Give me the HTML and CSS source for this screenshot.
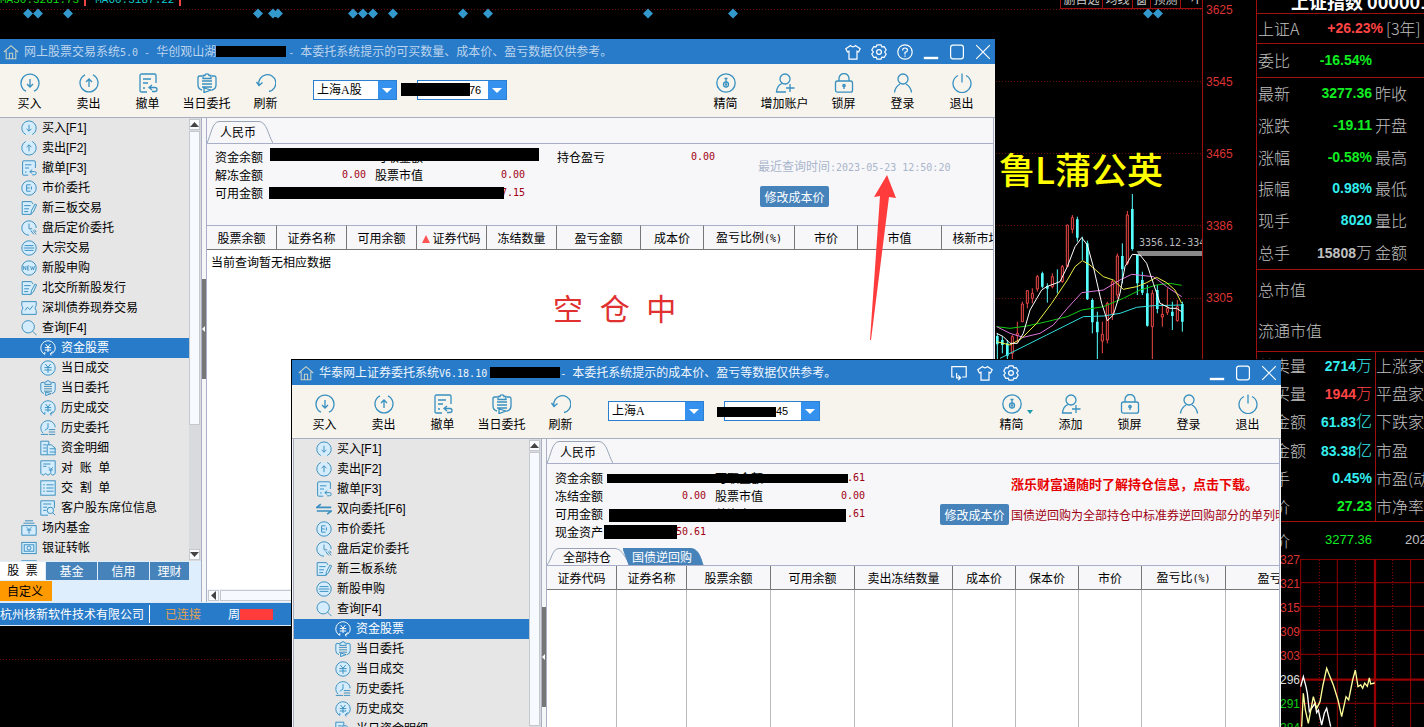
FILE: index.html
```html
<!DOCTYPE html>
<html lang="zh-CN">
<head>
<meta charset="utf-8">
<title>网上股票交易系统</title>
<link rel="stylesheet" href="styles.css">
</head>
<body>
<svg class="sprite" aria-hidden="true">
  <symbol id="home" viewBox="0 0 20 20"><path d="M1 10L10 2l9 8M4 8.500v10h12v-10M8 18.500v-7h4v7"/></symbol>
  <symbol id="buy" viewBox="0 0 20 20"><path d="M6 18.200A9 9 0 1 1 14 18.200M10 6v8M7 11l3 3 3-3"/></symbol>
  <symbol id="sell" viewBox="0 0 20 20"><path d="M6 1.800A9 9 0 1 0 14 1.800M10 14V6M7 9l3-3 3 3"/></symbol>
  <symbol id="cancel" viewBox="0 0 20 20"><path d="M9 19H3.500Q2 19 2 17.500V2.500Q2 1 3.500 1h13Q18 1 18 2.500V10M5 6h8M5 10h5M5 15h2M14 12l-3 2.500 3 2.500M11 14.500h6q2 0 2 2t-2 2h-3"/></symbol>
  <symbol id="clip" viewBox="0 0 20 20"><path d="M5 3H2.500Q1 3 1 5v7q0 4 4 5M15 3h2.500Q19 3 19 5v7q0 4-4 5M6 2.500h2Q8 .8 10 .8t2 1.700h2v3H6zM5 8h10M5 11h10M5 14h10M7 15v4.500l7-2.500z"/></symbol>
  <symbol id="refresh" viewBox="0 0 20 20"><path d="M3 12A8.500 8.500 0 1 1 13 18.500M.5 9L3 12.500 6.500 9.500"/></symbol>
  <symbol id="simple" viewBox="0 0 20 20"><circle cx="10" cy="10" r="9.200"/><path d="M8.500 5.500h3M10 5.500v3.500"/><circle cx="10" cy="11.500" r="2.500"/><circle cx="10" cy="11.500" r=".6"/></symbol>
  <symbol id="useradd" viewBox="0 0 20 20"><circle cx="10" cy="6" r="5"/><path d="M7 10.500Q2 12.500 1.500 19H11M15 11v8M11 15h8.500"/></symbol>
  <symbol id="lock" viewBox="0 0 20 20"><rect x="1.500" y="8" width="17" height="11.200" rx="2"/><path d="M5 8V5.500a5 5 0 0 1 10 0V8M10 12v4"/><circle cx="10" cy="12.500" r="1.200"/></symbol>
  <symbol id="user" viewBox="0 0 20 20"><circle cx="10" cy="6" r="5"/><path d="M1.500 19.500Q2 14 7 11M18.500 19.500Q18 14 13 11"/></symbol>
  <symbol id="power" viewBox="0 0 20 20"><path d="M6 2.500A9 9 0 1 0 14 2.500M10 .5v9"/></symbol>
  <symbol id="shirt" viewBox="0 0 20 20"><path d="M7 2Q10 5 13 2l6 4-2 4-2-1v10H5V9l-2 1-2-4z"/></symbol>
  <symbol id="gear" viewBox="0 0 20 20"><path d="M7.500 1h5l1 2.500 3-.3 2.500 4.300L17 10l2 2.500-2.500 4.300-3-.3-1 2.500h-5l-1-2.500-3 .3L1 12.500 3 10 1 7.500l2.500-4.300 3 .3z"/><circle cx="10" cy="10" r="3"/></symbol>
  <symbol id="help" viewBox="0 0 20 20"><circle cx="10" cy="10" r="9"/><path d="M7 8q0-3 3-3t3 2.700Q13 9.500 10 10.500V13M10 14.500v1.500"/></symbol>
  <symbol id="min" viewBox="0 0 20 20"><path stroke-width="3" d="M1 17.500h18"/></symbol>
  <symbol id="max" viewBox="0 0 20 20"><rect x="2" y="1.500" width="16" height="17" rx="3"/></symbol>
  <symbol id="close" viewBox="0 0 20 20"><path d="M1.500 1.500l17 17M18.500 1.500l-17 17"/></symbol>
  <symbol id="dock" viewBox="0 0 20 20"><path d="M4 15H1V2h18v13h-5M7 10v6h4M9 13l3 3-3 3"/></symbol>
  <symbol id="price" viewBox="0 0 20 20"><circle cx="10" cy="10" r="9"/><path d="M12 6H7v8h5M7 10h4M13 8v4"/></symbol>
  <symbol id="note" viewBox="0 0 20 20"><path d="M13 18H1.500V2H13l2 3M4 7h8M4 11h6M4 14.500h5M17.500 5l2 1-4 9-3 2.500.5-4z"/></symbol>
  <symbol id="clock" viewBox="0 0 20 20"><path d="M10 19A9 9 0 1 1 19 10M10 4.500V11h4M12 13l4 5M15 13l4 5M17 12l2 3"/></symbol>
  <symbol id="bulk" viewBox="0 0 20 20"><circle cx="10" cy="10" r="9"/><path d="M4.500 7h11M3.500 10h13M4.500 13h11"/></symbol>
  <symbol id="new" viewBox="0 0 20 20"><circle cx="10" cy="10" r="9"/><path fill="none" stroke-width="1" d="M3 12.500v-5l3 5v-5M10.500 7.500H8v5h2.500M8 10h2M12 7.500l1.200 5 1.300-4 1.200 4 1.300-5"/></symbol>
  <symbol id="bond" viewBox="0 0 20 20"><path d="M1 2h18v5q-3 3 0 6v5H1v-5q3-3 0-6z"/><path fill="none" d="M5 13l3-4 3 3 4-5"/></symbol>
  <symbol id="search" viewBox="0 0 20 20"><circle cx="9" cy="8.500" r="7.700"/><path d="M14.500 14l5 5"/></symbol>
  <symbol id="yen" viewBox="0 0 20 20"><circle cx="10" cy="10" r="9"/><path fill="none" d="M6.500 5L10 9l3.500-4M5.500 9.500h9M5.500 12.500h9M10 9v7"/></symbol>
  <symbol id="yenback" viewBox="0 0 20 20"><path d="M6 18A9 9 0 1 1 19 10Q19 16 13 17"/><path fill="none" d="M14 19.500L13 17l3-2.500M7 5l3 4 3-4M6 9.500h8M6 12.500h8M10 9v6M6 18v-3"/></symbol>
  <symbol id="hist" viewBox="0 0 20 20"><path d="M4 16.500A9 9 0 1 1 19 9"/><path fill="none" d="M1 18h9M10 4v6l-4 3M11 12h8M11 15h8M11 18h8"/></symbol>
  <symbol id="detail" viewBox="0 0 20 20"><path d="M9 18.500H1V1.500h10V6M4 6h4M4 10h4M4 14h4M9 18.500V6h5l5 4v8.500zM12 11h7M12 15h7"/></symbol>
  <symbol id="bill" viewBox="0 0 20 20"><path d="M1 17V1h18v16M1 17l3 2 3-2 3 2 3-2 3 2 3-2"/><path fill="none" d="M4 5h9M4 8h4M11 9l2.500 3L16 9M11 12.500h5M13.500 12v4"/></symbol>
  <symbol id="list" viewBox="0 0 20 20"><rect x="1" y="1" width="18" height="18"/><path d="M4 6h2M8 6h9M4 10h2M8 10h9M4 14h2M8 14h9"/></symbol>
  <symbol id="seat" viewBox="0 0 20 20"><path d="M10 19H1V1h17v9M4 5h10M4 9h5M4 13h4"/><circle cx="13" cy="13" r="4"/><path d="M16 16l3 3"/></symbol>
  <symbol id="fund" viewBox="0 0 20 20"><path d="M5 1h10M3 4h14M1 7h18v12H1z"/><path fill="none" d="M7 9l3 3 3-3M7 12.500h6M10 12v5"/></symbol>
  <symbol id="bank" viewBox="0 0 20 20"><rect x="1" y="3" width="18" height="14"/><rect x="4" y="6" width="12" height="8"/><circle cx="10" cy="10" r="2.500"/></symbol>
  <symbol id="swap" viewBox="0 0 20 20"><path fill="none" stroke-width="2" d="M19 8H1l5-4M1 12.500h18l-5 4"/></symbol>
</svg>

<div class="desktop">
  <main class="chart">
    <div class="plot">
      <svg class="grid" aria-hidden="true">
        <g class="dots">
          <line x1="0" x2="100%" y1="9.500" y2="9.500"/><line x1="0" x2="100%" y1="81.500" y2="81.500"/><line x1="0" x2="100%" y1="153.500" y2="153.500"/><line x1="0" x2="100%" y1="225.500" y2="225.500"/><line x1="0" x2="100%" y1="298.500" y2="298.500"/><line x1="0" x2="100%" y1="659.500" y2="659.500"/>
        </g>
        <path class="gems" d="M23 13.500l5-5 5 5-5 5zm10 0l5-5 5 5-5 5zm30 0l5-5 5 5-5 5zm190 0l5-5 5 5-5 5zm15 0l5-5 5 5-5 5zm5 0l5-5 5 5-5 5zm75 0l5-5 5 5-5 5zm10 0l5-5 5 5-5 5zm10 0l5-5 5 5-5 5zm20 0l5-5 5 5-5 5zm70 0l5-5 5 5-5 5zm25 0l5-5 5 5-5 5zm160 0l5-5 5 5-5 5zm85 0l5-5 5 5-5 5zm415 0l5-5 5 5-5 5zm10 0l5-5 5 5-5 5z"/>
      </svg>
      <div class="plot-top">
        <p class="averages"><span class="ma30">MA30:3281.73</span><i></i><span class="ma60">MA60:3187.22</span><i></i></p>
        <nav class="chart-tabs"><button>删自选</button><button>均线</button><button>窗</button><button>预测</button><button>→I</button></nav>
      </div>
      <svg class="candles" viewBox="0 0 672 1080" aria-hidden="true">
        <g fill="none" stroke="#f04848" stroke-width="3">
          <path d="M97 1005v75M112 965v65M127 905v10M142 870v55M157 865v45M172 825v50M217 820v45M247 795v53M277 645v55M367 965v95M382 905v125M397 840v120M412 760v135M442 633v162M517 870v207M547 910v70M562 865v80M592 900v65"/>
          <path fill="#000" d="M94 1010h6v50h-6zM109 1000h6v6h-6zM124 912h6v53h-6zM139 872h6v38h-6zM154 880h6v15h-6zM169 830h6v37h-6zM214 830h6v30h-6zM244 800h6v45h-6zM259 675h6v125h-6zM274 653h6v35h-6zM364 1003h6v20h-6zM379 910h6v110h-6zM394 845h6v95h-6zM409 768h6v117h-6zM439 645h6v145h-6zM514 880h6v100h-6zM544 943h6v8h-6zM559 925h6v12h-6zM589 920h6v42h-6z"/>
        </g>
        <g fill="none" stroke="#5ff" >
          <path stroke-width="3" d="M52 1000v77M67 1010v50M82 1020v60M187 815v50M202 850v58M232 808v72M292 650v75M307 710v70M322 722v178M337 895v105M352 935v142M427 730v120M457 582v170M472 765v120M487 815v70M502 855v125M532 855v85M577 905v85M607 905v90"/>
          <path stroke-width="8" d="M52 1008v25M67 1020v15M82 1030v37M187 820v40M202 858v8M292 658v55M322 730v168M337 900v67M352 965v32M427 768v40M457 627v120M472 765v85M487 840v38M502 880v97M532 870v57M577 935v13M607 912v53"/>
        </g>
        <path fill="#888" stroke="none" d="M470 753h202v15H478z"/>
        <g fill="none" stroke-width="3">
          <path stroke="#3dd" d="M60 1075L120 1045 200 1005 310 950 370 948 420 940 470 922 520 917 605 915"/>
          <path stroke="#1c1" d="M50 980L90 985 140 978 200 965 262 950 305 930 370 920 430 895 480 870 530 855 570 850 605 856"/>
          <path stroke="#d7d" d="M50 980L90 1000 130 1012 180 1000 220 975 262 925 305 878 370 870 420 840 455 823 520 830 560 860 605 890"/>
          <path stroke="#ee4" d="M50 1025L90 1035 125 1015 170 970 215 910 262 840 285 800 307 782 330 795 370 830 400 840 430 868 470 860 500 848 530 832 560 848 585 870 605 910"/>
          <path stroke="#fff" d="M50 1000L70 1010 90 1030 112 1030 130 1000 150 930 185 870 200 860 240 845 262 800 285 740 305 713 322 735 340 800 365 910 382 962 400 945 420 880 435 800 457 763 480 765 500 790 520 850 540 910 570 925 590 925 605 935"/>
        </g>
      </svg>
      <p class="range">3356.12-3343.50</p>
      <p class="signature">鲁L蒲公英</p>
    </div>
    <div class="axis"><span>3625</span><span>3545</span><span>3465</span><span>3386</span><span>3305</span></div>
  </main>

  <aside class="quote">
    <h1>上证指数 000001</h1>
    <section><div class="row r30"><div class="pair wide"><span>上证A</span><b class="up">+26.23%</b></div><span>[3年]</span></div></section>
    <section><div class="row r34"><div class="pair"><span>委比</span><b class="down">-16.54%</b></div></div></section>
    <section class="latest">
      <div class="row"><div class="pair"><span>最新</span><b class="down">3277.36</b></div><span>昨收</span></div>
      <div class="row"><div class="pair"><span>涨跌</span><b class="down">-19.11</b></div><span>开盘</span></div>
      <div class="row"><div class="pair"><span>涨幅</span><b class="down">-0.58%</b></div><span>最高</span></div>
      <div class="row"><div class="pair"><span>振幅</span><b class="flat">0.98%</b></div><span>最低</span></div>
      <div class="row"><div class="pair"><span>现手</span><b class="flat">8020</b></div><span>量比</span></div>
      <div class="row"><div class="pair"><span>总手</span><span><b>15808</b>万</span></div><span>金额</span></div>
    </section>
    <section class="caps"><div class="row">总市值</div><div class="row">流通市值</div></section>
    <section class="volumes">
      <div class="row"><div class="pair"><span>总卖量</span><span class="flat"><b>2714</b>万</span></div><span>上涨家</span></div>
      <div class="row"><div class="pair"><span>总买量</span><span class="up"><b>1944</b>万</span></div><span>平盘家</span></div>
      <div class="row"><div class="pair"><span>卖金额</span><span class="flat"><b>61.83</b>亿</span></div><span>下跌家</span></div>
      <div class="row"><div class="pair"><span>买金额</span><span class="flat"><b>83.38</b>亿</span></div><span>市盈</span></div>
      <div class="row"><div class="pair"><span>换手</span><b class="flat">0.45%</b></div><span>市盈(动</span></div>
      <div class="row"><div class="pair"><span>均价</span><b class="down">27.23</b></div><span>市净率</span></div>
    </section>
    <section><div class="row r38"><div class="pair"><span>现价</span><span class="plain down">3277.36</span></div><span class="plain date">2023</span></div></section>
    <div class="intraday">
      <div class="levels"><span>3327</span><span>3321</span><span>3315</span><span>3309</span><span>3303</span><span class="mid">3296</span><span class="low">3291</span><span class="low">3284</span></div>
      <svg viewBox="720 657 372 504" aria-hidden="true">
        <g fill="none" stroke="#900" stroke-width="3"><path d="M722 657v504M832 657v504M1052 657v504M720 658h372M720 728h372M720 799h372M720 871h372M720 943h372M720 1090h372"/><path stroke-width="7" d="M945 657v504M720 1019h372"/><path stroke-dasharray="3 6" d="M778 660v501M886 660v501M998 660v501"/>
        <path stroke="#fff" stroke-width="4" d="M722 1040l8-30 8 30 4 20 6 55 17-25 5 28 5-8 10 45 8-35 7-15 12 55"/><path stroke="#ff9" stroke-width="4" d="M725 1160l5-100 6 50 9 40 15-80 10 35 10-20 9-50 11-50 10 25 10 25 14 45 11 50 13-60 8 10 12-60 8-30 8 50 8-5 6 10 6-16 8 10 6-25 4 18 12-3"/></g>
      </svg>
    </div>
  </aside>

  <section class="window first">
    <header class="title"><svg class="home"><use href="#home"/></svg><h2>网上股票交易系统<span class="num">5.0 - </span>华创观山湖</h2><i class="mask"></i><h2><span class="num">- </span>本委托系统提示的可买数量、成本价、盈亏数据仅供参考。</h2>
      <div class="controls"><button aria-label="皮肤"><svg><use href="#shirt"/></svg></button><button aria-label="设置"><svg><use href="#gear"/></svg></button><button aria-label="帮助"><svg><use href="#help"/></svg></button><button aria-label="最小化"><svg><use href="#min"/></svg></button><button aria-label="最大化"><svg><use href="#max"/></svg></button><button aria-label="关闭"><svg><use href="#close"/></svg></button></div>
    </header>
    <div class="toolbar">
      <button><svg><use href="#buy"/></svg>买入</button><button><svg><use href="#sell"/></svg>卖出</button><button><svg><use href="#cancel"/></svg>撤单</button><button><svg><use href="#clip"/></svg>当日委托</button><button><svg><use href="#refresh"/></svg>刷新</button>
      <div class="combos"><span class="combo market"><select aria-label="市场"><option>上海A股</option></select></span><span class="combo account"><select aria-label="账户"><option>76</option></select><i class="mask"></i></span></div>
      <button><svg><use href="#simple"/></svg>精简</button><button><svg><use href="#useradd"/></svg>增加账户</button><button><svg><use href="#lock"/></svg>锁屏</button><button><svg><use href="#user"/></svg>登录</button><button><svg><use href="#power"/></svg>退出</button>
    </div>
    <div class="body">
      <div class="side">
        <div class="treebox">
          <ul class="tree">
            <li><button><svg><use href="#buy"/></svg>买入[F1]</button></li><li><button><svg><use href="#sell"/></svg>卖出[F2]</button></li><li><button><svg><use href="#cancel"/></svg>撤单[F3]</button></li><li><button><svg><use href="#price"/></svg>市价委托</button></li><li><button><svg><use href="#note"/></svg>新三板交易</button></li><li><button><svg><use href="#clock"/></svg>盘后定价委托</button></li><li><button><svg><use href="#bulk"/></svg>大宗交易</button></li><li><button><svg><use href="#new"/></svg>新股申购</button></li><li><button><svg><use href="#note"/></svg>北交所新股发行</button></li><li><button><svg><use href="#bond"/></svg>深圳债券现券交易</button></li>
            <li><button><svg><use href="#search"/></svg>查询[F4]</button>
              <ul><li><button class="on"><svg><use href="#yenback"/></svg>资金股票</button></li><li><button><svg><use href="#yen"/></svg>当日成交</button></li><li><button><svg><use href="#clip"/></svg>当日委托</button></li><li><button><svg><use href="#yenback"/></svg>历史成交</button></li><li><button><svg><use href="#hist"/></svg>历史委托</button></li><li><button><svg><use href="#detail"/></svg>资金明细</button></li><li><button><svg><use href="#bill"/></svg>对  账  单</button></li><li><button><svg><use href="#list"/></svg>交  割  单</button></li><li><button><svg><use href="#seat"/></svg>客户股东席位信息</button></li></ul></li>
            <li><button><svg><use href="#fund"/></svg>场内基金</button></li><li><button><svg><use href="#bank"/></svg>银证转帐</button></li><li><button aria-label="更多"><svg><use href="#list"/></svg></button></li>
          </ul>
          <div class="vbar"><i class="arrow upward"></i><i class="thumb"></i><i class="arrow downward"></i></div>
        </div>
        <div class="modes"><button class="on">股  票</button><button>基金</button><button>信用</button><button>理财</button></div>
        <div class="modes custom"><button>自定义</button></div>
      </div>
      <div class="splitter"><i></i></div>
      <div class="content">
        <div class="tabs"><button class="tab"><svg viewBox="0 0 66 22" preserveAspectRatio="none"><path d="M0 22C4 14 5 1 12 .5H52C60 1 61 14 66 22"/></svg>人民币</button></div>
        <div class="info">
          <dl>
            <div><dt>资金余额</dt><dd></dd></div><div><dt>可取金额</dt><dd></dd></div><div><dt>持仓盈亏</dt><dd>0.00</dd></div>
            <div><dt>解冻金额</dt><dd>0.00</dd></div><div><dt>股票市值</dt><dd>0.00</dd></div><div></div>
            <div><dt>可用金额</dt><dd></dd></div><div><dt></dt><dd>7.15</dd></div><div></div>
          </dl>
          <i class="mask m1"></i><i class="mask m2"></i>
          <div class="stamp"><p>最近查询时间<span class="num">:2023-05-23 12:50:20</span></p><button class="action">修改成本价</button></div>
        </div>
        <div class="data">
          <table><colgroup><col class="c70"><col class="c70"><col class="c70"><col class="c70"><col class="c70"><col class="c84"><col class="c63"><col class="c91"><col class="c63"><col class="c84"><col class="c70"></colgroup>
            <thead><tr><th>股票余额</th><th>证券名称</th><th>可用余额</th><th class="sorted">证券代码</th><th>冻结数量</th><th>盈亏金额</th><th>成本价</th><th>盈亏比例<span class="num">(%)</span></th><th>市价</th><th>市值</th><th>核新市场</th></tr></thead>
            <tbody><tr><td colspan="11">当前查询暂无相应数据</td></tr></tbody></table>
          <p class="empty">空  仓  中</p>
          <div class="hbar"><i class="arrow leftward"></i><i class="thumb"></i></div>
        </div>
      </div>
    </div>
    <footer class="status"><span>杭州核新软件技术有限公司</span><span class="link">已连接</span><span>周<i class="redact"></i></span></footer>
    <svg class="pointer" viewBox="869 174 28 168" aria-hidden="true"><path fill="#ff3b3b" d="M887 175l9 23-7-1-18 143h-1l10-144-6 1z"/></svg>
  </section>

  <section class="window second">
    <header class="title"><svg class="home"><use href="#home"/></svg><h2>华泰网上证券委托系统<span class="num">V6.18.10</span></h2><i class="mask"></i><h2><span class="num">- </span>本委托系统提示的成本价、盈亏等数据仅供参考。</h2>
      <div class="controls tools"><button aria-label="停靠"><svg><use href="#dock"/></svg></button><button aria-label="皮肤"><svg><use href="#shirt"/></svg></button><button aria-label="设置"><svg><use href="#gear"/></svg></button></div>
      <div class="controls"><button aria-label="最小化"><svg><use href="#min"/></svg></button><button aria-label="最大化"><svg><use href="#max"/></svg></button><button aria-label="关闭"><svg><use href="#close"/></svg></button></div>
    </header>
    <div class="toolbar">
      <button><svg><use href="#buy"/></svg>买入</button><button><svg><use href="#sell"/></svg>卖出</button><button><svg><use href="#cancel"/></svg>撤单</button><button><svg><use href="#clip"/></svg>当日委托</button><button><svg><use href="#refresh"/></svg>刷新</button>
      <div class="combos"><span class="combo market"><select aria-label="市场"><option>上海A</option></select></span><span class="combo account"><select aria-label="账户"><option>45</option></select><i class="mask"></i></span></div>
      <button class="more"><svg><use href="#simple"/></svg>精简</button><button><svg><use href="#useradd"/></svg>添加</button><button><svg><use href="#lock"/></svg>锁屏</button><button><svg><use href="#user"/></svg>登录</button><button><svg><use href="#power"/></svg>退出</button>
    </div>
    <div class="body">
      <div class="side">
        <div class="treebox">
          <ul class="tree">
            <li><button><svg><use href="#buy"/></svg>买入[F1]</button></li><li><button><svg><use href="#sell"/></svg>卖出[F2]</button></li><li><button><svg><use href="#cancel"/></svg>撤单[F3]</button></li><li><button><svg><use href="#swap"/></svg>双向委托[F6]</button></li><li><button><svg><use href="#price"/></svg>市价委托</button></li><li><button><svg><use href="#clock"/></svg>盘后定价委托</button></li><li><button><svg><use href="#note"/></svg>新三板系统</button></li><li><button><svg><use href="#bulk"/></svg>新股申购</button></li>
            <li><button><svg><use href="#search"/></svg>查询[F4]</button>
              <ul><li><button class="on"><svg><use href="#yenback"/></svg>资金股票</button></li><li><button><svg><use href="#clip"/></svg>当日委托</button></li><li><button><svg><use href="#yen"/></svg>当日成交</button></li><li><button><svg><use href="#hist"/></svg>历史委托</button></li><li><button><svg><use href="#yenback"/></svg>历史成交</button></li><li><button><svg><use href="#detail"/></svg>当日资金明细</button></li></ul></li>
          </ul>
          <div class="vbar"><i class="arrow upward"></i><i class="thumb"></i></div>
        </div>
      </div>
      <div class="splitter"><i></i></div>
      <div class="content">
        <div class="tabs"><button class="tab"><svg viewBox="0 0 66 22" preserveAspectRatio="none"><path d="M0 22C4 14 5 1 12 .5H52C60 1 61 14 66 22"/></svg>人民币</button></div>
        <div class="info">
          <dl>
            <div><dt>资金余额</dt><dd></dd></div><div><dt>可取金额</dt><dd>.61</dd></div>
            <div><dt>冻结金额</dt><dd>0.00</dd></div><div><dt>股票市值</dt><dd>0.00</dd></div>
            <div><dt>可用金额</dt><dd></dd></div><div><dt>总资产</dt><dd>.61</dd></div>
            <div><dt>现金资产</dt><dd>50.61</dd></div><div></div>
          </dl>
          <i class="mask m1"></i><i class="mask m2"></i><i class="mask m3"></i>
          <div class="promo"><a href="#download">涨乐财富通随时了解持仓信息，点击下载。</a><div><button class="action">修改成本价</button><span>国债逆回购为全部持仓中标准券逆回购部分的单列明</span></div></div>
        </div>
        <div class="tabs sub"><button class="tab"><svg viewBox="0 0 84 17" preserveAspectRatio="none"><path d="M0 17C5 11 5 1 12 .5H68C76 1 78 11 84 17"/></svg>全部持仓</button><button class="tab blue"><svg viewBox="0 0 84 17" preserveAspectRatio="none"><path d="M6 17L0 .5H68C76 1 78 11 80 17"/></svg>国债逆回购</button></div>
        <div class="data lined">
          <table><colgroup><col class="c70"><col class="c70"><col class="c84"><col class="c84"><col class="c98"><col class="c63"><col class="c63"><col class="c63"><col class="c84"><col class="c88"></colgroup>
            <thead><tr><th>证券代码</th><th>证券名称</th><th>股票余额</th><th>可用余额</th><th>卖出冻结数量</th><th>成本价</th><th>保本价</th><th>市价</th><th>盈亏比<span class="num">(%)</span></th><th>盈亏</th></tr></thead>
            <tbody><tr><td></td><td></td><td></td><td></td><td></td><td></td><td></td><td></td><td></td><td></td></tr></tbody></table>
        </div>
      </div>
    </div>
  </section>
</div>
</body>
</html>
```
FILE: styles.css
```css
* { box-sizing: border-box; }
body { margin: 0; background: #000; color: #000; font: 12px/18px "Noto Sans CJK SC", sans-serif; }
h1, h2, p, ul, dl, dd { margin: 0; padding: 0; }
ul { list-style: none; }
button, select { font: inherit; color: inherit; border: 0; margin: 0; padding: 0; background: none; white-space: pre; }
i { display: block; }
svg { display: block; flex: none; fill: none; stroke: currentColor; }
.sprite { position: absolute; width: 0; height: 0; }
.num { font: 10px/18px "DejaVu Sans Mono", monospace; white-space: pre; }
.mask { background: #000; }

.desktop { position: relative; height: 100vh; overflow: hidden; display: grid; grid-template-columns: 1fr 168px; }

/* market chart */
.chart { display: grid; grid-template-columns: 1fr 53px; min-width: 0; }
.plot { position: relative; overflow: hidden; border-right: 1px solid #a01010; }
.grid { position: absolute; width: 100%; height: 100%; stroke: none; }
.dots { stroke: #6a0d0d; stroke-dasharray: 1 2; }
.gems { fill: #39c; }
.plot-top { position: relative; display: flex; justify-content: space-between; height: 9px; align-items: flex-end; }
.averages { display: flex; align-items: center; font: 11px/16px "Liberation Mono", monospace; height: 14px; margin-bottom: 2px; }
.averages i { width: 2px; height: 12px; margin: 0 9px 0 5px; background: #e44; }
.ma30 { color: #1d1; }
.ma60 { color: #1cc; }
.chart-tabs { display: flex; color: #ccc; border-bottom: 1px solid #a01010; }
.chart-tabs button { border-left: 1px solid #a01010; padding: 0 3px 0 2px; line-height: 18px; }
.candles { position: absolute; top: 0; right: -2px; width: 224px; height: 360px; }
.range { position: absolute; top: 234px; right: 0; width: 63px; overflow: hidden; white-space: nowrap; color: #bbb; font: 10px/18px "DejaVu Sans Mono", monospace; }
.signature { position: absolute; top: 142px; right: 39px; color: #ff0; font-size: 36px; line-height: 52px; font-weight: 500; }
.axis { display: flex; flex-direction: column; gap: 56px; padding: 2px 0 0 3px; font: 12px/16px "Liberation Sans", sans-serif; color: #d33; }

/* quote panel */
.quote { overflow: hidden; border-left: 1px solid #a01010; color: #c0c0c0; font-size: 16px; font-weight: 300; display: flex; flex-direction: column; }
.quote h1 { height: 13px; padding: 0 0 2px 34px; display: flex; align-items: flex-end; color: #fff; font-size: 18px; line-height: 20px; white-space: nowrap; }
.quote section { flex: none; display: flex; flex-direction: column; border-top: 1px solid #a01010; }
.row { flex: 1; display: flex; align-items: center; gap: 3px; padding: 0 0 2px 1px; white-space: nowrap; line-height: 24px; }
.pair { flex: none; width: 114px; display: flex; justify-content: space-between; align-items: center; }
.pair.wide { width: 125px; }
.pair b { font: bold 14px/24px "Liberation Sans", sans-serif; }
.up { color: #f44; }
.down { color: #1e2; }
.flat { color: #3ee; }
.r30 { flex: none; height: 29px; }
.r34 { flex: none; height: 33px; }
.r38 { flex: none; height: 37px; }
.latest { height: 192px; }
.caps { height: 82px; }
.volumes { height: 170px; }
.volumes .row { padding-bottom: 0; }
.volumes .row > span { border-left: 1px solid #a01010; height: 100%; line-height: 26px; }
.volumes .pair { padding-bottom: 2px; }
.plain { font: 13px/24px "Liberation Sans", sans-serif; }
.date { padding-left: 30px; }
.intraday { flex: 1; display: flex; min-height: 0; }
.intraday svg { width: 124px; height: 168px; }
.levels { width: 43px; text-align: right; font: 12px/16px "Liberation Sans", sans-serif; color: #d33; display: flex; flex-direction: column; gap: 8px; margin-top: -7px; }
.levels .mid { color: #ddd; }
.levels .low { color: #1c1; }

/* windows */
.window { position: absolute; display: flex; flex-direction: column; background: #f7f7f9; }
.first { left: 0; right: 429px; top: 39px; bottom: 101px; }
.second { left: 291px; right: 143px; top: 359px; bottom: 0; border: solid #000; border-width: 1px 0 0 1px; }
.title { flex: none; height: 25px; display: flex; align-items: center; padding: 0 4px 0 3px; background: #287bc9; color: #bcd3ec; }
.second .title { padding-left: 6px; color: #f0f6fc; }
.title h2 { font-size: 12px; line-height: 18px; font-weight: 400; white-space: nowrap; }
.home { width: 16px; height: 16px; margin-right: 5px; color: #c9d2c4; stroke-width: 1.3; }
.title .mask { width: 70px; height: 11px; margin-right: 2px; }
.second .title .mask { margin: 0 0 0 3px; }
.controls { margin-left: auto; display: flex; gap: 10px; color: #fff; }
.tools { margin-right: 190px; }
.tools + .controls { margin-left: 0; }
.controls svg { width: 16px; height: 16px; stroke-width: 1.5; }

.toolbar { flex: none; display: flex; height: 53px; background: #f7f4ed; padding-right: 4px; }
.second .toolbar { padding-left: 3px; }
.toolbar button { position: relative; flex: none; width: 59px; display: flex; flex-direction: column; align-items: center; gap: 1px; padding-top: 9px; }
.toolbar svg { width: 20px; height: 20px; color: #3790c0; stroke-width: 1.3; }
.more::after { content: ""; position: absolute; right: 8px; top: 25px; border: 3px solid transparent; border-top: 4px solid #1b9aaa; }
.combos { flex: 1; display: flex; gap: 20px; padding: 16px 0 0 18px; }
.combo { position: relative; display: block; height: 20px; background: #fff; border: 1px solid #2a7fd0; }
.combo select { appearance: none; display: block; width: 100%; height: 18px; padding-left: 3px; line-height: 18px; color: #000; font-family: "Liberation Serif", "Noto Sans CJK SC", serif; }
.combo::after { content: ""; position: absolute; right: 0; top: 0; width: 18px; height: 18px; background: #fff; clip-path: polygon(4px 7px, 14px 7px, 9px 12px); }
.combo::before { content: ""; position: absolute; right: 0; top: 0; width: 18px; height: 18px; background: #3492ee; }
.market { width: 84px; }
.account { width: 90px; }
.account select { padding-left: 51px; font: 11px/18px "Liberation Sans", sans-serif; }
.account .mask { position: absolute; left: -17px; top: 2px; width: 69px; height: 13px; }
.second .combos { padding-left: 18px; }
.second .market, .second .account { width: 96px; }
.second .account .mask { left: -8px; top: 5px; width: 59px; height: 10px; }

.body { flex: 1; min-height: 0; display: flex; border-top: 1px solid #a9afc0; }
.second .body { padding-left: 1px; }
.side { flex: none; width: 202px; display: flex; flex-direction: column; background: #dfeefc; border-right: 1px solid #a9afc0; }
.second .side { width: 249px; border-left: 1px solid #a9afc0; }
.treebox { flex: 1; min-height: 0; display: flex; background: #e6e6e6; overflow: hidden; }
.tree { flex: 1; height: 0; }
.tree button { width: 100%; height: 20px; display: flex; align-items: center; gap: 5px; padding-left: 21px; font-family: "Liberation Sans", "Noto Sans CJK SC", sans-serif; }
.tree ul button { padding-left: 40px; }
.second .tree button { padding-left: 22px; }
.second .tree ul button { padding-left: 41px; }
.tree svg { width: 16px; height: 16px; color: #3a8fc0; stroke-width: 1.2; fill: #d4ecfb; }
.tree .on { background: #287bc9; color: #fff; }
.tree .on svg { color: #fff; fill: none; }
.vbar { flex: none; width: 12px; padding: 1px 0; display: flex; flex-direction: column; background: #d9dadd; }
.arrow { flex: none; position: relative; width: 11px; height: 11px; background: #fafcff; border: 1px solid #c4c8cf; }
.arrow::after { content: ""; position: absolute; left: 0; top: 2px; width: 9px; height: 5px; background: #444; clip-path: polygon(50% 0, 100% 100%, 0 100%); }
.downward::after { clip-path: polygon(0 0, 100% 0, 50% 100%); }
.leftward::after { left: 2px; top: 0; width: 5px; height: 9px; clip-path: polygon(0 50%, 100% 0, 100% 100%); }
.vbar .thumb { flex: 1; margin: 1px 1px 0 0; background: #f6fafe; border: 1px solid #c4c8cf; }
.first .vbar .thumb { margin-bottom: 124px; }
.modes { flex: none; display: flex; gap: 1px; height: 18px; margin-top: 1px; padding-right: 12px; }
.modes button { flex: 1; background: #4683bb; color: #fff; }
.modes button:last-child { flex: 0 0 39px; }
.modes button.on { flex: 0 0 45px; background: #fff; color: #000; font-family: "Liberation Sans", "Noto Sans CJK SC", sans-serif; }
.modes.custom { height: 21px; padding-bottom: 1px; }
.modes.custom button { flex: 0 0 52px; background: #f90; color: #000; padding-right: 2px; }
.splitter { flex: none; width: 4px; background: #f4f6f8; display: flex; align-items: flex-start; }
.splitter i { width: 4px; height: 100px; margin-top: 161px; background: #777; display: flex; align-items: center; }
.second .splitter i { margin-top: 168px; }
.splitter i::after { content: ""; border: 3px solid transparent; border-left: 0; border-right-color: #fff; }

.content { flex: 1; min-width: 0; display: flex; flex-direction: column; border: solid #a9afc8; border-width: 0 1px; margin-right: 1px; overflow: hidden; }
.tabs { flex: none; display: flex; align-items: flex-end; height: 26px; border-bottom: 1px solid #a9afc8; }
.second .tabs { height: 25px; }
.tab { position: relative; z-index: 0; width: 66px; height: 22px; padding-right: 4px; }
.tab svg { position: absolute; inset: 0; width: 100%; height: 100%; z-index: -1; fill: #f7f7f9; stroke: #98a5b8; }
.second .sub { height: 17px; }
.sub .tab { width: 84px; height: 17px; line-height: 17px; }
.sub .blue { margin-left: -8px; color: #fff; padding-right: 6px; }
.sub .blue svg { fill: #4683bb; stroke: #4683bb; }
.info { flex: none; position: relative; display: flex; height: 81px; padding: 4px 0 0 8px; }
.info dl { flex: none; display: grid; grid-template-columns: 151px 150px 158px; grid-auto-rows: 18px; column-gap: 9px; }
.first .info dl > :nth-child(3n) { margin-left: 23px; margin-right: -23px; }
.info dl div { display: flex; justify-content: space-between; }
.info dd { color: #a00012; font: 10px/18px "DejaVu Sans Mono", monospace; }
.info .mask { position: absolute; }
.first .m1 { left: 63px; top: 4px; width: 269px; height: 13px; }
.first .m2 { left: 62px; top: 43px; width: 235px; height: 12px; }
.stamp { margin-left: 66px; padding-top: 9px; color: #a9b5cb; white-space: nowrap; }
.action { height: 21px; width: 69px; border-radius: 2px; background: #4683bb; color: #fff; }
.stamp .action { margin: 9px 0 0 2px; display: block; }
.second .info { height: 85px; padding-top: 5px; }
.second .info dl { grid-template-columns: 151px 150px; }
.second .m1 { left: 60px; top: 10px; width: 241px; height: 9px; }
.second .m2 { left: 62px; top: 45px; width: 237px; height: 13px; }
.second .m3 { left: 57px; top: 61px; width: 73px; height: 14px; }
.promo { margin-left: auto; width: 339px; flex: none; overflow: hidden; padding-top: 6px; white-space: nowrap; color: #a00012; }
.promo a { display: block; margin-left: 71px; color: #e80000; font-size: 13px; font-weight: 700; text-decoration: none; }
.promo div { display: flex; gap: 2px; align-items: center; margin-top: 11px; }
.promo .action { flex: none; }

.data { flex: 1; min-height: 0; position: relative; background: #fff; display: flex; flex-direction: column; }
.first .data { overflow: hidden; }
table { width: 805px; table-layout: fixed; border-collapse: separate; border-spacing: 0; }
.c63 { width: 63px; } .c70 { width: 70px; } .c84 { width: 84px; } .c88 { width: 88px; } .c91 { width: 91px; } .c98 { width: 98px; }
th { height: 25px; padding: 0; font-weight: 400; background: #f7f7f9; border: solid #777; border-width: 0 1px 1px 0; white-space: nowrap; }
.first th { border-top: 1px solid #a9afc8; }
td { padding: 2px 4px; line-height: 19px; }
.sorted::before { content: ""; display: inline-block; border: 4px solid transparent; border-top: 0; border-bottom: 8px solid #f55; margin-right: 2px; }
.lined table { width: 767px; height: 100%; }
.lined th { height: 24px; }
.lined td { border-right: 1px solid #bbb; }
.empty { padding: 15px 0 0 346px; color: #e03030; font: 30px/44px "Liberation Sans", "Noto Sans CJK SC", sans-serif; white-space: pre; }
.hbar { margin-top: auto; display: flex; gap: 1px; height: 13px; padding: 1px; background: #f0f3f8; }
.hbar .thumb { flex: 1; border: 1px solid #c4c8cf; background: #f6fafe; }

.status { flex: none; height: 24px; display: flex; align-items: center; background: #287bc9; color: #fff; border: solid #dceaf8; border-width: 1px 0; padding-right: 4px; white-space: nowrap; }
.status span { display: flex; align-items: center; }
.status .link { border-left: 1px solid #fff; margin: 0 27px 0 5px; padding-left: 15px; color: #e0a050; }
.redact { width: 33px; height: 11px; background: #ff3b3b; }
.pointer { position: absolute; right: 98px; top: 135px; width: 28px; height: 168px; stroke: none; }
```
